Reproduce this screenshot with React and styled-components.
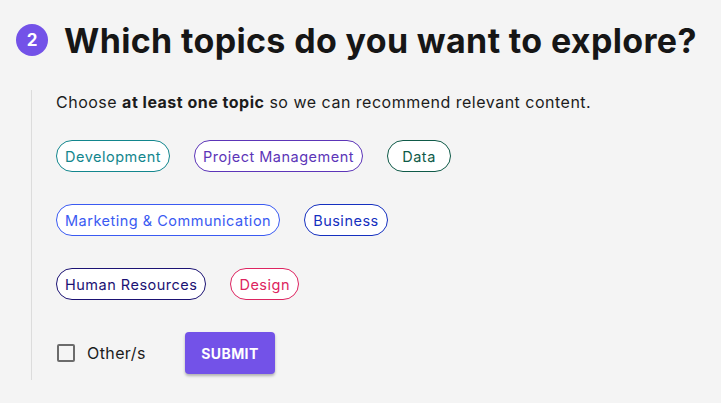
import React, { useState } from "react";
import styled, { createGlobalStyle } from "styled-components";

const Global = createGlobalStyle`
  html, body { margin: 0; padding: 0; background: #f4f4f4; }
  body { font-family: Inter, "Noto Sans", sans-serif; color: #1a1a1a; }
  * { box-sizing: border-box; }
`;

const Page = styled.div`
  padding: 24px 0 0 16px;
`;

const Header = styled.div`
  display: flex;
  align-items: center;
  gap: 16px;
  height: 32px;
`;

const StepBadge = styled.div`
  width: 32px;
  height: 32px;
  border-radius: 50%;
  background: #7352e8;
  color: #fff;
  font-weight: 700;
  font-size: 17px;
  display: flex;
  align-items: center;
  justify-content: center;
  flex: none;
`;

const Title = styled.h1`
  margin: 2px 0 0;
  font-size: 34px;
  font-weight: 700;
  color: #161616;
  letter-spacing: 0.35px;
  line-height: 40px;
`;

const Section = styled.div`
  margin: 34px 0 0 15px;
  border-left: 1px solid #dcdcdc;
  padding: 2px 0 6px 24px;
  display: flex;
  flex-direction: column;
`;

const Intro = styled.p`
  margin: 0 0 28px;
  font-size: 16px;
  line-height: 20px;
  letter-spacing: 0.5px;
  color: #1c1c1c;
  b { font-weight: 700; }
`;

const ChipRow = styled.div`
  display: flex;
  gap: 24px;
  margin-bottom: 32px;
`;

const Chip = styled.button`
  height: 32px;
  min-width: 64px;
  padding: 0 8px;
  border-radius: 16px;
  border: 1px solid ${(p) => p.$color};
  color: ${(p) => p.$color};
  background: ${(p) => (p.$active ? "#eef" : "#fff")};
  font-family: inherit;
  font-size: 14.5px;
  letter-spacing: 0.5px;
  cursor: pointer;
  display: flex;
  align-items: center;
  justify-content: center;
`;

const Footer = styled.div`
  display: flex;
  align-items: center;
  height: 42px;
`;

const CheckLabel = styled.label`
  display: flex;
  align-items: center;
  gap: 12px;
  font-size: 16px;
  letter-spacing: 0.4px;
  color: #1c1c1c;
  margin-left: 1px;
  width: 128px;
  cursor: pointer;
`;

const Box = styled.span`
  width: 18px;
  height: 18px;
  border: 2px solid #6b6b6b;
  border-radius: 2px;
  background: ${(p) => (p.$on ? "#6b6b6b" : "transparent")};
`;

const Submit = styled.button`
  width: 90px;
  height: 42px;
  border: none;
  border-radius: 4px;
  background: #7352e8;
  color: #fff;
  font-family: inherit;
  font-weight: 700;
  font-size: 14px;
  letter-spacing: 0.4px;
  box-shadow: 0 2px 3px rgba(0, 0, 0, 0.28);
  cursor: pointer;
`;

const rows = [
  [
    { label: "Development", color: "#12868d" },
    { label: "Project Management", color: "#5c35b8" },
    { label: "Data", color: "#0f5a48" },
  ],
  [
    { label: "Marketing & Communication", color: "#3a5af2" },
    { label: "Business", color: "#1530c0" },
  ],
  [
    { label: "Human Resources", color: "#1b1273" },
    { label: "Design", color: "#dd2460" },
  ],
];

export default function App() {
  const [sel, setSel] = useState({});
  const [other, setOther] = useState(false);
  return (
    <Page>
      <Global />
      <Header>
        <StepBadge>2</StepBadge>
        <Title>Which topics do you want to explore?</Title>
      </Header>
      <Section>
        <Intro>
          Choose <b>at least one topic</b> so we can recommend relevant content.
        </Intro>
        {rows.map((row, i) => (
          <ChipRow key={i}>
            {row.map((c) => (
              <Chip
                key={c.label}
                $color={c.color}
                $active={sel[c.label]}
                onClick={() => setSel({ ...sel, [c.label]: !sel[c.label] })}
              >
                {c.label}
              </Chip>
            ))}
          </ChipRow>
        ))}
        <Footer>
          <CheckLabel onClick={() => setOther(!other)}>
            <Box $on={other} />
            Other/s
          </CheckLabel>
          <Submit>SUBMIT</Submit>
        </Footer>
      </Section>
    </Page>
  );
}
